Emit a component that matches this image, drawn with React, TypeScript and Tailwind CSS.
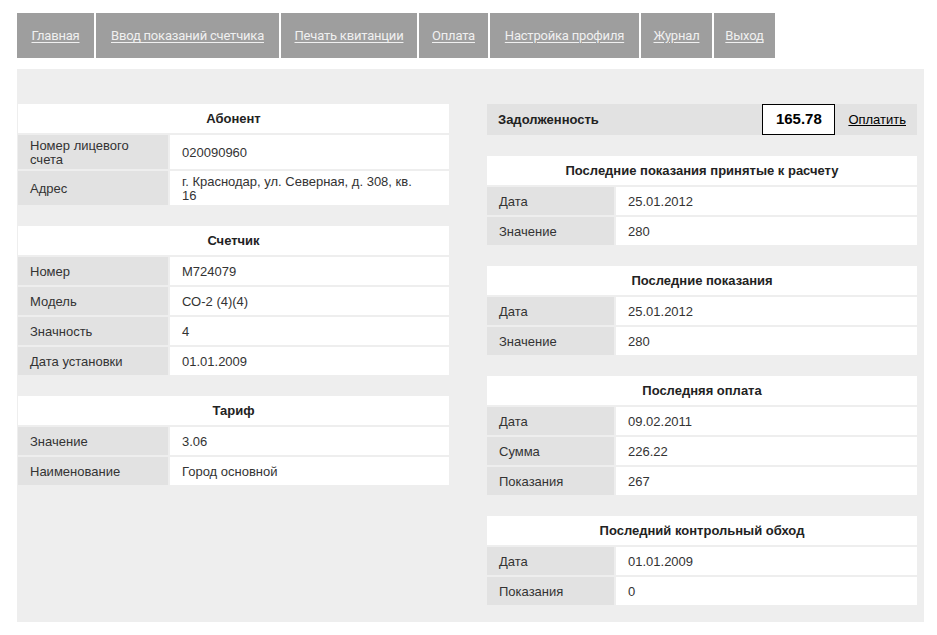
import React from 'react';

type Row = [string, string];

interface InfoTableProps {
  title: string;
  rows: Row[];
  labelWidth: string;
  className?: string;
}

const NAV: [string, string][] = [
  ['Главная', 'w-[77px]'],
  ['Ввод показаний счетчика', 'w-[183px]'],
  ['Печать квитанции', 'w-[136px]'],
  ['Оплата', 'w-[69px]'],
  ['Настройка профиля', 'w-[149px]'],
  ['Журнал', 'w-[71px]'],
  ['Выход', 'w-[61px]'],
];

const InfoTable: React.FC<InfoTableProps> = ({ title, rows, labelWidth, className = '' }) => (
  <div className={`flex flex-col gap-[2px] ${className}`}>
    <div className="h-[29px] bg-white flex items-center justify-center pt-[1px] font-bold text-[13px] text-[#222]">
      {title}
    </div>
    {rows.map(([label, value], idx) => {
      const tall = label.length > 14 || value.length > 36;
      return (
        <div key={idx} className={`flex gap-[2px] ${tall ? 'h-[34px]' : 'h-[28px]'}`}>
          <div className={`${labelWidth} shrink-0 bg-[#e2e2e2] flex items-center pl-[12px] pr-[10px] pt-[1px] leading-[14px] text-[13px] text-[#333]`}>
            {label}
          </div>
          <div className="flex-1 bg-white flex items-center pl-[12px] pr-[22px] pt-[1px] leading-[14px] text-[13px] text-[#333]">
            {value}
          </div>
        </div>
      );
    })}
  </div>
);

export default function App() {
  return (
    <div className="w-[937px] h-[635px] bg-white pt-[13px] pl-[17px]" style={{ fontFamily: '"Liberation Sans", Arial, sans-serif' }}>
      {/* Top menu */}
      <div className="flex gap-[2px] h-[45px]">
        {NAV.map(([item, w]) => (
          <a
            key={item}
            href="#"
            className={`${w} bg-[#9e9e9e] flex items-center justify-center text-[13px] text-[#f0f0f0] underline underline-offset-2 tracking-[-0.2px]`}
            style={{ fontFamily: 'Roboto, "Open Sans", sans-serif' }}
          >
            {item}
          </a>
        ))}
      </div>

      {/* Content panel */}
      <div className="mt-[11px] w-[907px] h-[553px] bg-[#eeeeee] pt-[35px] pl-[1px] flex gap-[38px]">
        {/* Left column */}
        <div className="w-[431px] flex flex-col">
          <InfoTable
            title="Абонент"
            labelWidth="w-[150px]"
            rows={[
              ['Номер лицевого счета', '020090960'],
              ['Адрес', 'г. Краснодар, ул. Северная, д. 308, кв. 16'],
            ]}
          />
          <InfoTable
            title="Счетчик"
            labelWidth="w-[150px]"
            className="mt-[21px]"
            rows={[
              ['Номер', 'М724079'],
              ['Модель', 'СО-2 (4)(4)'],
              ['Значность', '4'],
              ['Дата установки', '01.01.2009'],
            ]}
          />
          <InfoTable
            title="Тариф"
            labelWidth="w-[150px]"
            className="mt-[21px]"
            rows={[
              ['Значение', '3.06'],
              ['Наименование', 'Город основной'],
            ]}
          />
        </div>

        {/* Right column */}
        <div className="w-[430px] flex flex-col">
          <div className="h-[31px] bg-[#e2e2e2] flex items-center pl-[11px] text-[13px] text-[#222]">
            <span className="font-bold flex-1">Задолженность</span>
            <span className="w-[73px] h-[31px] bg-white border border-black flex items-center justify-center font-bold text-[15px] text-black">
              165.78
            </span>
            <a href="#" className="ml-[13px] mr-[11px] underline text-black text-[13px]">Оплатить</a>
          </div>
          <InfoTable
            title="Последние показания принятые к расчету"
            labelWidth="w-[127px]"
            className="mt-[21px]"
            rows={[
              ['Дата', '25.01.2012'],
              ['Значение', '280'],
            ]}
          />
          <InfoTable
            title="Последние показания"
            labelWidth="w-[127px]"
            className="mt-[21px]"
            rows={[
              ['Дата', '25.01.2012'],
              ['Значение', '280'],
            ]}
          />
          <InfoTable
            title="Последняя оплата"
            labelWidth="w-[127px]"
            className="mt-[21px]"
            rows={[
              ['Дата', '09.02.2011'],
              ['Сумма', '226.22'],
              ['Показания', '267'],
            ]}
          />
          <InfoTable
            title="Последний контрольный обход"
            labelWidth="w-[127px]"
            className="mt-[21px]"
            rows={[
              ['Дата', '01.01.2009'],
              ['Показания', '0'],
            ]}
          />
        </div>
      </div>
    </div>
  );
}
